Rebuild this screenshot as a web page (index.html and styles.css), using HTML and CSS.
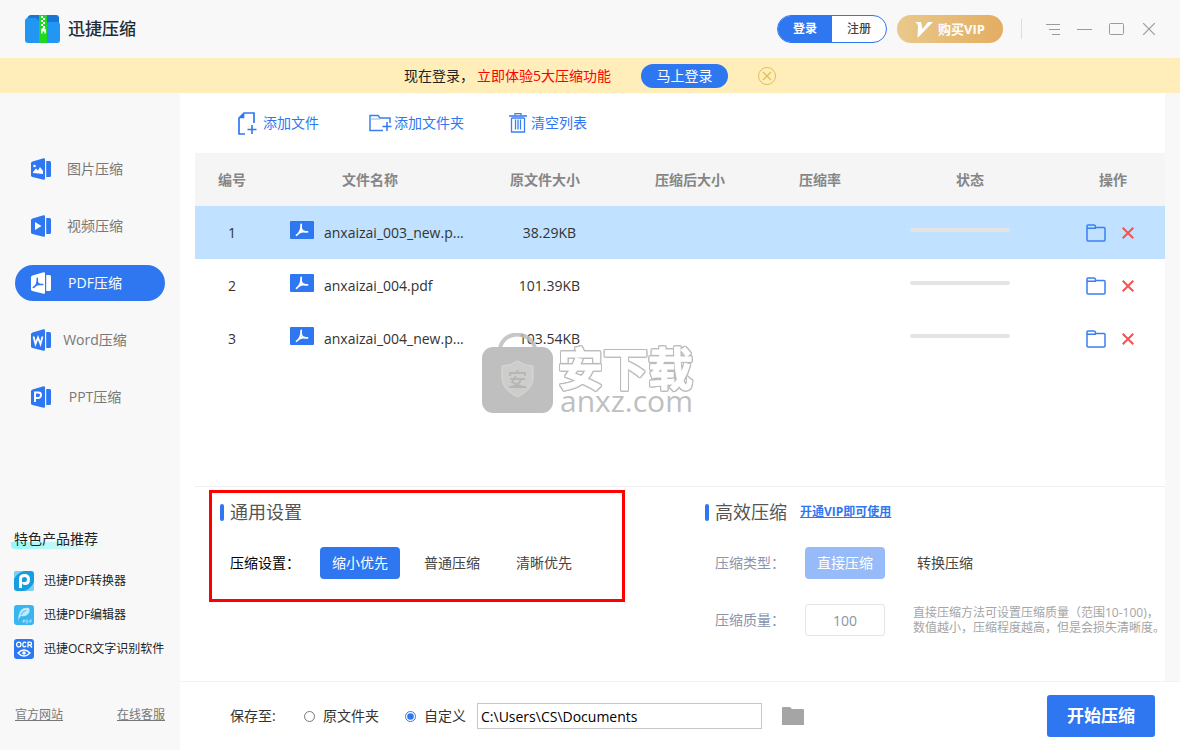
FILE: index.html
```html
<!DOCTYPE html>
<html lang="zh-CN">
<head>
<meta charset="utf-8">
<title>迅捷压缩</title>
<link rel="stylesheet" href="styles.css">
</head>
<body>
<svg class="sprite" aria-hidden="true">
  <symbol id="pdf-mark" viewBox="0 0 14 14"><path d="M1.500 12.200C4 11 6.500 7 6.200 1.500M6.200 5C6.500 8 9 9 12.500 8.800M4.500 9.800Q7 8.300 10 8.800" fill="none" stroke="currentColor" stroke-width="1.800" stroke-linecap="round"/></symbol>
  <symbol id="book" viewBox="0 0 20 22"><path d="M1.500 3.500L12.500.2Q14 0 14 1.200V20.800Q14 22 12.500 21.800L1.500 19Q0 18.600 0 17.500V5Q0 4 1.500 3.500ZM15.200 3H18.500Q20 3 20 4.500V17.500Q20 19 18.500 19H15.200Z" fill="currentColor"/></symbol>
  <symbol id="folder" viewBox="0 0 20 18"><path d="M1 16V2Q1 1 2 1H8Q9 1 9.300 2L9.600 3.500H18Q19 3.500 19 4.500V16Q19 17 18 17H2Q1 17 1 16ZM1 4.200H10" fill="none" stroke="#3a7ff2" stroke-width="1.500"/></symbol>
  <symbol id="cross" viewBox="0 0 12 12"><path d="M.7.7L11.300 11.300M11.300.7L.7 11.300" fill="none" stroke="currentColor" stroke-width="2"/></symbol>
</svg>

<header class="topbar">
  <div class="brand">
    <svg width="35" height="28" viewBox="0 0 35 28"><path d="M2 4Q3 0 6 0H31Q34 0 34 3V12H2Z" fill="#1976d2"/><path d="M0 6Q0 3 3 3H9Q12 3 13 5Q14 7 17 7H32Q35 7 35 10V25Q35 28 32 28H3Q0 28 0 25Z" fill="#2196f3"/><path d="M14 0H22V28H14Z" fill="#20d820"/><path d="M16 1h2v2h-2zM18 3h2v2h-2zM16 5h2v2h-2zM18 7h2v2h-2zM16 9h2v2h-2zM18 11h2v2h-2z" fill="#fff"/><path d="M16 18V15.500Q16 13 18.500 13T21 15.500V18L19.500 19V16.500H17.500V19Z" fill="#fff"/></svg>
    <h1 class="brand-name">迅捷压缩</h1>
  </div>
  <div class="account">
    <div class="auth"><button class="auth-login">登录</button><button class="auth-register">注册</button></div>
    <button class="vip"><svg width="18" height="17" viewBox="0 0 18 17"><path d="M0 1H6L7.500 8L13 1H18L2.500 17L3 5Q2.500 2 0 1Z" fill="#fff"/></svg>购买VIP</button>
    <div class="window-tools">
      <button aria-label="菜单"><svg width="14" height="11"><path d="M0 .5H14M3 5.500H14M6 10.500H14" stroke="#9b9b9b"/></svg></button>
      <button aria-label="最小化"><svg width="15" height="11"><path d="M0 5.500H15" stroke="#9b9b9b"/></svg></button>
      <button aria-label="最大化"><svg width="15" height="12"><rect x=".5" y=".5" width="14" height="11" rx="1" fill="none" stroke="#9b9b9b"/></svg></button>
      <button aria-label="关闭"><svg width="12" height="12"><path d="M0 0L12 12M12 0L0 12" stroke="#9b9b9b" stroke-width="1.200"/></svg></button>
    </div>
  </div>
</header>

<div class="banner">
  <p class="banner-text">现在登录，<span class="banner-hot">立即体验5大压缩功能</span></p>
  <button class="banner-login">马上登录</button>
  <button class="banner-close" aria-label="关闭提示"><svg width="18" height="18"><circle cx="9" cy="9" r="8.500" fill="none" stroke="#dfbd55"/><path d="M5 5L13 13M13 5L5 13" stroke="#dfbd55" stroke-width="1.200"/></svg></button>
</div>

<div class="body">
  <aside class="sidebar">
    <nav class="nav">
      <a class="nav-item" href="#image"><svg width="20" height="22"><use href="#book"/><path d="M2 15V14L5 10.500L7 12.500L9 9L12 13V16Z" fill="#fff"/><circle cx="3.500" cy="8" r="1.300" fill="#fff"/></svg><span class="nav-label">图片压缩</span></a>
      <a class="nav-item" href="#video"><svg width="20" height="22"><use href="#book"/><path d="M4 7L10.500 11L4 15Z" fill="#fff"/></svg><span class="nav-label">视频压缩</span></a>
      <a class="nav-item nav-active" href="#pdf"><svg width="20" height="22"><use href="#book"/><use href="#pdf-mark" x="1" y="5" width="12" height="12" color="#2f77f1"/></svg><span class="nav-label">PDF压缩</span></a>
      <a class="nav-item" href="#word"><svg width="20" height="22"><use href="#book"/><path d="M2.500 7.500L4.500 15L7 8.500L9.500 15L11.500 7.500" fill="none" stroke="#fff" stroke-width="1.800"/></svg><span class="nav-label">Word压缩</span></a>
      <a class="nav-item" href="#ppt"><svg width="20" height="22"><use href="#book"/><path d="M4 16V6.500H7.500Q10 6.500 10 9T7.500 12H4.500" fill="none" stroke="#fff" stroke-width="1.900"/></svg><span class="nav-label">PPT压缩</span></a>
    </nav>
    <section class="promo">
      <h2 class="promo-title">特色产品推荐</h2>
      <a class="promo-item" href="#converter"><svg width="20" height="20"><rect width="20" height="20" rx="3" fill="#159fe0"/><path d="M0 8V3Q0 0 3 0H10Q3 2 0 8ZM20 11V17Q20 20 17 20H10Q17 18 20 11Z" fill="#83cdf0"/><path d="M6.500 17V8Q6.500 4.500 10.500 4.500T14.500 8.500T11 12.500Q9.500 12.500 9.500 11" fill="none" stroke="#fff" stroke-width="3"/></svg>迅捷PDF转换器</a>
      <a class="promo-item" href="#editor"><svg width="20" height="20"><rect width="20" height="20" rx="3" fill="#38b6f0"/><path d="M4 17Q4 9 7 5Q10 2 15 3Q17 7 13 10Q10 12 7 11Q4.500 13 4 17Z" fill="#bce9fb"/><path d="M7 10Q8 6 12 5.500" stroke="#49b9ec" fill="none"/><path d="M9 18V15H10.500V16.500H9M12 15H13Q14 15 14 16.500T13 18H12ZM16 18V15H18M16 16.500H17.500" stroke="#d8f3fd" stroke-width=".6" fill="none"/></svg>迅捷PDF编辑器</a>
      <a class="promo-item" href="#ocr"><svg width="20" height="20"><rect width="20" height="20" rx="3" fill="#2b78f5"/><ellipse cx="4.800" cy="5.500" rx="2.200" ry="2.400" fill="none" stroke="#fff" stroke-width="1.300"/><path d="M12.200 3.800Q9 2 8.800 5.500T12.200 7.200M14 8.500V3.200H16Q17.500 3.200 17.500 4.700T16 6H14.500M16 6L18 8.500" fill="none" stroke="#fff" stroke-width="1.300"/><path d="M4 14Q10 8 16 14Q10 20 4 14Z" fill="none" stroke="#fff" stroke-width="1.400"/><circle cx="10" cy="14" r="1.800" fill="#fff"/></svg>迅捷OCR文字识别软件</a>
    </section>
    <div class="side-links"><a href="#site">官方网站</a><a href="#service">在线客服</a></div>
  </aside>

  <div class="workspace">
    <main class="panel">
      <div class="toolbar">
        <button class="tool tool-file"><svg width="20" height="23" viewBox="0 0 20 23"><path d="M8 22H2V6L7 1H17V11M6.500 1V5.500H2" fill="none" stroke="#2f77f1" stroke-width="1.700"/><path d="M3 5L6 2V5Z" fill="#2f77f1"/><path d="M15 13V22M10.500 17.500H19.500" stroke="#2f77f1" stroke-width="1.600"/></svg>添加文件</button>
        <button class="tool tool-folder"><svg width="23" height="18" viewBox="0 0 23 18"><path d="M14 16.500H1V1.500H9L11 4H21V9" fill="none" stroke="#3a7ff2" stroke-width="1.500"/><path d="M1 5H11" stroke="#8bb4f7"/><path d="M18 8V17M13.500 12.500H22.500" stroke="#2f77f1" stroke-width="1.500"/></svg>添加文件夹</button>
        <button class="tool tool-clear"><svg width="18" height="20" viewBox="0 0 18 20"><path d="M0 3H18" stroke="#2f77f1" stroke-width="1.500"/><path d="M6 2.500V.7H12V2.500M2.500 5V19H15.500V5M2.500 5H15.500M6.500 6.500V16.500M9 6.500V16.500M11.500 6.500V16.500" fill="none" stroke="#3a7ff2" stroke-width="1.300"/></svg>清空列表</button>
      </div>
      <div class="list">
        <table class="files">
          <colgroup><col class="c-no"><col><col class="c-size"><col class="c-after"><col class="c-rate"><col class="c-state"><col class="c-ops"></colgroup>
          <thead><tr><th>编号</th><th>文件名称</th><th>原文件大小</th><th>压缩后大小</th><th>压缩率</th><th>状态</th><th>操作</th></tr></thead>
          <tbody>
            <tr class="selected"><td>1</td><td><div class="file"><svg class="file-icon" viewBox="0 0 24 18"><rect width="24" height="18" rx="1" fill="#2f77f1"/><use href="#pdf-mark" x="5" y="2" width="14" height="14" color="#fff"/></svg>anxaizai_003_new.p...</div></td><td class="size">38.29KB</td><td></td><td></td><td><div class="bar"></div></td><td><div class="ops"><button aria-label="打开文件夹"><svg width="20" height="18"><use href="#folder"/></svg></button><button class="remove" aria-label="删除"><svg width="12" height="12"><use href="#cross"/></svg></button></div></td></tr>
            <tr><td>2</td><td><div class="file"><svg class="file-icon" viewBox="0 0 24 18"><rect width="24" height="18" rx="1" fill="#2f77f1"/><use href="#pdf-mark" x="5" y="2" width="14" height="14" color="#fff"/></svg>anxaizai_004.pdf</div></td><td class="size">101.39KB</td><td></td><td></td><td><div class="bar"></div></td><td><div class="ops"><button aria-label="打开文件夹"><svg width="20" height="18"><use href="#folder"/></svg></button><button class="remove" aria-label="删除"><svg width="12" height="12"><use href="#cross"/></svg></button></div></td></tr>
            <tr><td>3</td><td><div class="file"><svg class="file-icon" viewBox="0 0 24 18"><rect width="24" height="18" rx="1" fill="#2f77f1"/><use href="#pdf-mark" x="5" y="2" width="14" height="14" color="#fff"/></svg>anxaizai_004_new.p...</div></td><td class="size">103.54KB</td><td></td><td></td><td><div class="bar"></div></td><td><div class="ops"><button aria-label="打开文件夹"><svg width="20" height="18"><use href="#folder"/></svg></button><button class="remove" aria-label="删除"><svg width="12" height="12"><use href="#cross"/></svg></button></div></td></tr>
          </tbody>
        </table>
        <div class="watermark">
          <svg width="71" height="80" viewBox="0 0 71 80"><path d="M18 15C22 -3 48 -3 53 15" fill="none" stroke="#bdbdbd" stroke-opacity=".85" stroke-width="4"/><rect y="14" width="71" height="66" rx="11" fill="#bfbfbf"/><path d="M35.500 28Q43 33 51 33V46Q50 57 35.500 64Q21 57 20 46V33Q28 33 35.500 28Z" fill="#cdcdcb" stroke="#d9d9d7"/><path d="M35.500 37V40M28 43V40H43V43M28 46H43M34 43L30 49L41 54M39 46Q38 52 29 54M27 54H44" fill="none" stroke="#b6b6b4" stroke-width="1.800"/></svg>
          <div class="mark-words"><span class="mark-cn">安下载</span><span class="mark-en">anxz.com</span></div>
        </div>
      </div>
      <div class="settings">
        <section class="general">
          <h2 class="group-title">通用设置</h2>
          <div class="row"><span class="row-label">压缩设置：</span><div class="choices"><button class="choice choice-on">缩小优先</button><button class="choice">普通压缩</button><button class="choice">清晰优先</button></div></div>
        </section>
        <section class="advanced">
          <div class="title-line"><h2 class="group-title">高效压缩</h2><a class="vip-link" href="#vip">开通VIP即可使用</a></div>
          <div class="row"><span class="row-label">压缩类型：</span><div class="choices choices-wide"><button class="choice choice-dim">直接压缩</button><button class="choice">转换压缩</button></div></div>
          <div class="row quality"><label class="row-label" for="quality">压缩质量：</label><input class="quality-input" id="quality" type="text" value="100"><p class="hint">直接压缩方法可设置压缩质量（范围10-100)，<br>数值越小，压缩程度越高，但是会损失清晰度。</p></div>
        </section>
      </div>
    </main>
    <footer class="footer">
      <label class="save-label" for="path">保存至:</label>
      <label class="radio"><input type="radio" name="target">原文件夹</label>
      <label class="radio"><input type="radio" name="target" checked>自定义</label>
      <input class="path" id="path" type="text" value="C:\Users\CS\Documents">
      <button class="browse" aria-label="选择文件夹"><svg width="22" height="18"><path d="M0 1Q0 0 1 0H8L10 2H21Q22 2 22 3V18H0Z" fill="#a5a5a5"/></svg></button>
      <button class="start">开始压缩</button>
    </footer>
  </div>
</div>
</body>
</html>
```
FILE: styles.css
```css
* { box-sizing: border-box; }
body {
  margin: 0;
  min-height: 100vh;
  display: flex;
  flex-direction: column;
  background: #f8f8f8;
  color: #333;
  font: 14px/20px "Open Sans", "Noto Sans CJK SC", sans-serif;
}
h1, h2, p { margin: 0; font-weight: 400; }
button {
  display: inline-flex;
  align-items: center;
  justify-content: center;
  border: 0;
  padding: 0;
  background: none;
  color: inherit;
  font: inherit;
  white-space: nowrap;
  cursor: pointer;
}
a { color: inherit; text-decoration: none; }
svg { display: block; flex: none; }
.sprite { position: absolute; width: 0; height: 0; }

.topbar { display: flex; align-items: center; justify-content: space-between; height: 58px; padding: 0 25px; }
.brand { display: flex; align-items: center; gap: 8px; }
.brand-name { font-size: 17px; font-weight: 500; color: #222b33; }
.account { display: flex; align-items: center; gap: 10px; }
.auth { display: flex; width: 110px; height: 28px; border: 1px solid #2f77f1; border-radius: 14px; overflow: hidden; background: #fff; font-size: 12px; font-weight: 500; }
.auth button { flex: 1; }
.auth-login { background: #2f77f1; color: #fff; font-weight: 700; }
.auth-register { color: #444; }
.vip { width: 106px; height: 28px; gap: 5px; border-radius: 14px; background: linear-gradient(90deg, #e9c98b, #e4ad62); color: #fff; font-size: 13px; font-weight: 700; }
.window-tools { display: flex; align-items: center; gap: 17px; height: 20px; margin-left: 8px; padding-left: 24px; border-left: 1px solid #ddd; }
.window-tools button:last-child { margin-left: 2px; }

.banner { display: flex; align-items: center; justify-content: center; height: 35px; background: #ffeeba; }
.banner-text { color: #222; }
.banner-hot { margin-left: 3px; color: #f00; }
.banner-login { width: 87px; height: 24px; margin: 0 30px; border-radius: 12px; background: #2f77f1; color: #fff; }

.body { display: flex; flex: 1; }
.sidebar { display: flex; flex-direction: column; width: 180px; padding: 58px 15px 25px; }
.nav { display: flex; flex-direction: column; gap: 21px; }
.nav-item { display: flex; align-items: center; height: 36px; padding-left: 16px; border-radius: 18px; color: #2f77f1; }
.nav-label { width: 88px; text-align: center; color: #777; }
.nav-active { background: #2f77f1; color: #fff; }
.nav-active .nav-label { color: #fff; }
.promo { display: flex; flex-direction: column; gap: 14px; margin-top: auto; font-size: 12px; color: #222; }
.promo-title { align-self: flex-start; margin: 0 0 8px -4px; padding: 0 8px 0 3px; font-size: 14px; background: linear-gradient(90deg, #93f8fa, #f8f8f8) 0 100% / 100% 7px no-repeat; border-radius: 4px; }
.promo-item { display: flex; align-items: center; gap: 10px; margin-left: -1px; white-space: nowrap; }
.side-links { display: flex; justify-content: space-between; margin-top: 46px; font-size: 12px; color: #777; }
.side-links a { text-decoration: underline; }

.workspace { display: flex; flex: 1; flex-direction: column; min-width: 0; }
.panel { display: flex; flex: 1; flex-direction: column; margin-right: 15px; padding-left: 15px; background: #fff; }
.toolbar { display: flex; align-items: center; height: 60px; padding-left: 42px; color: #2f77f1; }
.tool { gap: 6px; }
.tool-folder { gap: 2px; margin-left: 50px; }
.tool-clear { gap: 4px; margin-left: 45px; }

.list { position: relative; flex: 1; border-bottom: 1px solid #eee; }
.files { width: 100%; table-layout: fixed; border-collapse: collapse; }
.c-no { width: 74px; }
.c-size { width: 148px; }
.c-after { width: 142px; }
.c-rate { width: 118px; }
.c-state { width: 182px; }
.c-ops { width: 104px; }
.files th, .files td { height: 53px; padding: 0; text-align: center; }
.files th { background: #f5f5f5; color: #868686; font-weight: 700; }
.files .selected { background: #c0e1ff; }
.files .size { padding-left: 9px; }
.file { display: flex; gap: 10px; align-items: center; padding-left: 21px; white-space: nowrap; }
.file-icon { width: 24px; height: 18px; margin-bottom: 5px; }
.bar { width: 100px; height: 4px; margin: 0 0 5px 31px; border-radius: 2px; background: #e4e4e4; }
.ops { display: flex; align-items: center; gap: 16px; padding-left: 25px; }
.remove { color: #f45353; }
.watermark { position: absolute; left: 287px; top: 180px; display: flex; gap: 5px; pointer-events: none; }
.mark-words { display: flex; flex-direction: column; padding-top: 14px; color: #bfbfbf; }
.mark-cn {
  font-size: 45px;
  font-weight: 700;
  line-height: 44px;
  color: #fff;
  -webkit-text-stroke: 1px #fff;
  filter: drop-shadow(1px 0 #bbb) drop-shadow(-1px 0 #bbb) drop-shadow(0 1px #bbb) drop-shadow(0 -1px #bbb);
}
.mark-en { padding-left: 2px; font-size: 30px; line-height: 20px; }

.settings { display: flex; height: 194px; padding: 3px 0 0 14px; }
.general { width: 416px; height: 112px; padding: 8px; border: 3px solid #f00; }
.advanced { flex: 1; padding: 11px 0 0 80px; }
.group-title { display: flex; align-items: center; gap: 6px; height: 22px; font-size: 18px; color: #555; }
.group-title::before { content: ""; width: 4px; height: 17px; border-radius: 2px; background: #2f77f1; }
.title-line { display: flex; align-items: center; gap: 13px; }
.vip-link { font-size: 12px; font-weight: 700; color: #2f77f1; text-decoration: underline; }
.row { display: flex; align-items: center; height: 32px; margin-top: 24px; padding-left: 10px; }
.row-label { width: 90px; color: #000; }
.advanced .row-label { color: #8b93ad; }
.choices { display: flex; gap: 12px; }
.choices-wide { gap: 20px; }
.choice { width: 80px; height: 32px; border-radius: 4px; color: #444; }
.choice-on { background: #2f77f1; color: #fff; }
.choice-dim { background: #97bbf8; color: #fff; }
.quality { margin-top: 25px; }
.quality-input { width: 80px; height: 32px; border: 1px solid #e4e4e4; border-radius: 3px; background: #fff; color: #8b93a5; font: inherit; text-align: center; }
.hint { margin-left: 28px; font-size: 12px; line-height: 15px; color: #a5a5a5; white-space: nowrap; }

.footer { display: flex; align-items: center; height: 69px; padding: 0 25px 0 50px; border-top: 1px solid #f3f3f3; background: #fff; }
.save-label { width: 74px; }
.radio { display: flex; align-items: center; gap: 8px; margin-right: 26px; }
.radio input { width: 11px; height: 11px; margin: 0; accent-color: #2f77f1; }
.path { width: 285px; height: 26px; margin-left: -15px; padding: 0 3px; border: 1px solid #c8c8c8; color: #000; font: inherit; }
.browse { margin-left: 20px; }
.start { width: 108px; height: 42px; margin-left: auto; border-radius: 3px; background: #2f77f1; color: #fff; font-size: 17px; font-weight: 700; }
```
